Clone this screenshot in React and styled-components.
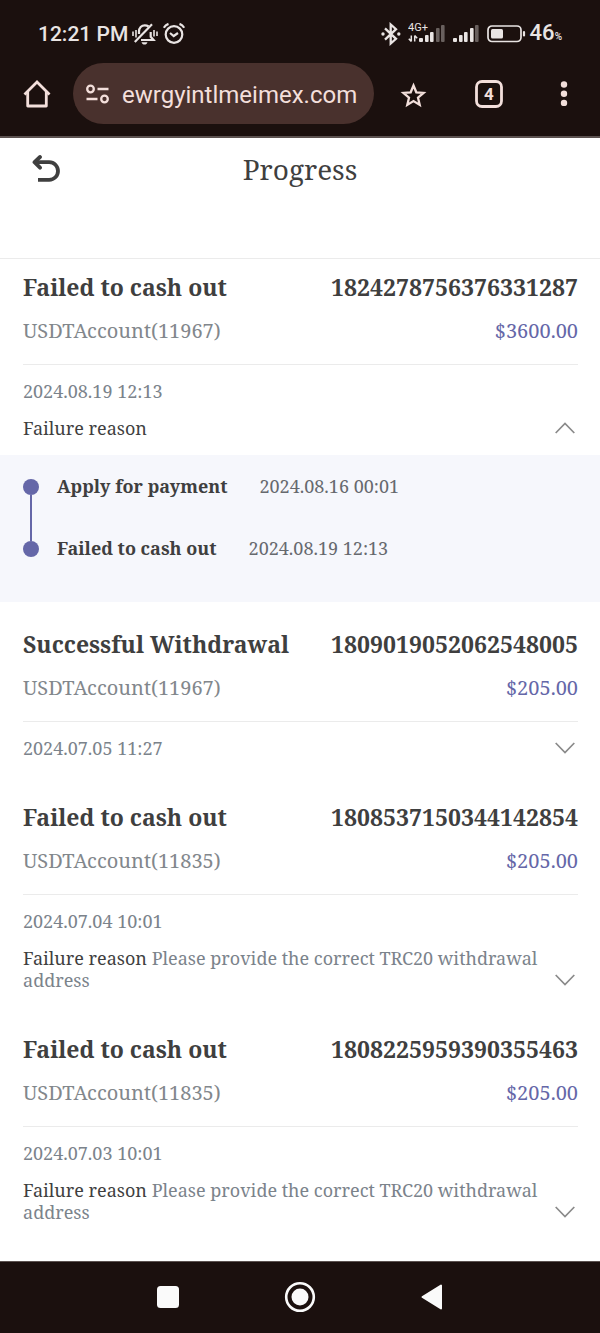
import React, { useState } from "react";
import styled, { createGlobalStyle } from "styled-components";

const colors = {
  chrome: "#1b100e",
  pill: "#49312d",
  chromeText: "#f3dfdb",
  status: "#e9e4e3",
  ink: "#3f3f3f",
  muted: "#82878c",
  date: "#7b838b",
  accent: "#6567a8",
  line: "#ebebeb",
  panel: "#f6f7fc",
};

const GlobalStyle = createGlobalStyle`
  * { box-sizing: border-box; }
  body {
    margin: 0;
    background: #fff;
    color: ${colors.ink};
    font-family: "Noto Serif", "DejaVu Serif Condensed", "DejaVu Serif", serif;
  }
  button, input { font: inherit; color: inherit; border: 0; background: none; padding: 0; margin: 0; }
  h1, h2, p, ol { margin: 0; padding: 0; }
`;

const Screen = styled.div`
  display: flex;
  flex-direction: column;
  min-height: 100vh;
`;

const BrowserChrome = styled.header`
  background: ${colors.chrome};
  color: ${colors.chromeText};
  border-bottom: 2px solid #5c5250;
  padding-bottom: 12px;
  font-family: Roboto, sans-serif;
`;

const StatusBar = styled.div`
  display: flex;
  align-items: center;
  justify-content: space-between;
  height: 63px;
  padding: 4px 38px 0;
  color: ${colors.status};
`;

const StatusGroup = styled.div`
  display: flex;
  align-items: center;
  gap: ${(p) => p.$gap}px;
`;

const Clock = styled.span`
  font-size: 21px;
  font-weight: 500;
  line-height: 28px;
`;

const Percent = styled.span`
  padding-top: 2px;
  font-size: 22px;
  font-weight: 500;
  line-height: 28px;
  small { font-size: 10px; }
`;

const Toolbar = styled.div`
  display: flex;
  align-items: center;
`;

const ToolButton = styled.button`
  flex: none;
  display: flex;
  align-items: center;
  justify-content: center;
  width: ${(p) => p.$width}px;
  height: 61px;
`;

const AddressPill = styled.label`
  flex: 1;
  min-width: 0;
  display: flex;
  align-items: center;
  gap: 12px;
  height: 61px;
  margin-right: 1px;
  padding: 0 8px 0 12px;
  border-radius: 31px;
  background: ${colors.pill};
`;

const AddressInput = styled.input`
  flex: 1;
  min-width: 0;
  height: 40px;
  padding-top: 2px;
  font-size: 24px;
  outline: none;
`;

const TitleBar = styled.div`
  display: grid;
  grid-template-columns: 92px 1fr 92px;
  align-items: center;
  height: 121px;
  padding-bottom: 58px;
  border-bottom: 1px solid ${colors.line};
`;

const BackButton = styled.button`
  display: flex;
  justify-content: center;
  align-items: center;
  height: 48px;
`;

const PageTitle = styled.h1`
  font-size: 28px;
  font-weight: 400;
  line-height: 40px;
  text-align: center;
`;

const RecordList = styled.main`
  flex: 1;
`;

const Record = styled.article`
  margin-bottom: 14px;
`;

const RecordBody = styled.div`
  padding: 12px 22px 16px 23px;
`;

const RecordRow = styled.div`
  display: flex;
  justify-content: space-between;
  align-items: center;
  gap: 16px;
`;

const RecordTitle = styled.h2`
  font-size: 23px;
  font-weight: 700;
  line-height: 32px;
`;

const RecordId = styled.span`
  font-size: 23px;
  font-weight: 700;
  line-height: 32px;
`;

const AccountRow = styled(RecordRow)`
  margin-top: 14px;
  padding-bottom: 19px;
  border-bottom: 1px solid ${colors.line};
  font-size: 20px;
  line-height: 28px;
  color: ${colors.muted};
`;

const Amount = styled.span`
  color: ${colors.accent};
`;

const RecordFooter = styled.div`
  display: flex;
  align-items: flex-end;
  gap: 4px;
  padding-top: 15px;
  font-size: 18px;
  line-height: 22px;
`;

const FooterText = styled.div`
  flex: 1;
  display: flex;
  flex-direction: column;
  gap: 15px;
  color: ${colors.date};
`;

const ReasonLabel = styled.span`
  color: ${colors.ink};
`;

const ToggleButton = styled.button`
  flex: none;
  display: flex;
  align-items: center;
  justify-content: center;
  width: 26px;
  height: 22px;
  svg { transform: ${(p) => (p.$open ? "rotate(180deg)" : "none")}; }
`;

const Timeline = styled.ol`
  list-style: none;
  height: 147px;
  padding: 20px 23px;
  background: ${colors.panel};
`;

const Step = styled.li`
  display: flex;
  gap: 18px;
  height: 62px;
  font-size: 18px;
  line-height: 22px;
`;

const StepMarker = styled.span`
  display: flex;
  flex-direction: column;
  align-items: center;
  width: 16px;
  padding-top: 4px;
  &::before {
    content: "";
    flex: none;
    width: 16px;
    height: 16px;
    border-radius: 50%;
    background: ${colors.accent};
  }
  &::after {
    content: "";
    width: 2px;
    height: ${(p) => (p.$last ? 0 : 46)}px;
    flex: none;
    background: ${colors.accent};
  }
`;

const StepText = styled.p`
  display: flex;
  gap: 32px;
  color: #66696e;
  strong { color: ${colors.ink}; }
`;

const NavBar = styled.nav`
  display: flex;
  justify-content: center;
  align-items: center;
  gap: 84px;
  height: 72px;
  padding-bottom: 2px;
  border-top: 1px solid #5c5250;
  background: ${colors.chrome};
`;

const NavButton = styled.button`
  display: flex;
  align-items: center;
  justify-content: center;
  width: 48px;
  height: 48px;
`;

const MutedBellIcon = () => (
  <svg width="26" height="24" viewBox="0 0 26 24" fill="none" stroke="currentColor" strokeWidth="2.2">
    <path d="M9 18h12.500l-2.800-3.200V10" />
    <path d="M7 12V9.500C7 5.800 9.500 3.300 12.800 3.300c1.500 0 2.700.4 3.800 1.200" />
    <path d="M2.800 20L20 2.300" />
    <path d="M9.500 20.300h6c-.5 1.700-1.500 2.300-3 2.300s-2.500-.6-3-2.300z" fill="currentColor" stroke="none" />
    <path d="M1 9.500v4.500M4 8v7.500M22 8v6.500M25 9.500v4.500" strokeWidth="1.600" />
  </svg>
);

const AlarmIcon = () => (
  <svg width="24" height="24" viewBox="0 0 24 24" fill="none" stroke="currentColor" strokeWidth="2.200">
    <circle cx="12" cy="12.500" r="8.300" />
    <path d="M8 11l3.700 3 4.300-3" />
    <path d="M1.800 5.800Q3.500 3 6.500 1.900M22.200 5.800Q20.500 3 17.500 1.900" />
  </svg>
);

const BluetoothIcon = () => (
  <svg width="20" height="24" viewBox="0 0 20 24" fill="none" stroke="currentColor" strokeWidth="2.300">
    <path d="M4 6.300l11 10.500-5.300 4.700V2.500l5.300 4.700-11 10.500" />
    <circle cx="2" cy="12" r="1.700" fill="currentColor" stroke="none" />
    <circle cx="17.800" cy="12" r="1.700" fill="currentColor" stroke="none" />
  </svg>
);

const bars = [
  [0, 4],
  [6, 7],
  [11, 10],
  [17, 14],
  [22, 17],
];

const SignalBars = ({ x, y, strong }) =>
  bars.map(([dx, h], i) => (
    <rect key={dx} x={x + dx} y={y - h} width={i ? 3.6 : 4} height={h} rx="1" fill="currentColor" opacity={i < strong ? 1 : 0.38} />
  ));

const MobileDataIcon = () => (
  <svg width="38" height="30" viewBox="0 0 38 30">
    <text x="0" y="12" fontFamily="Roboto, sans-serif" fontSize="11" fill="currentColor">4G+</text>
    <path d="M3.300 16.500v6M0.800 19.800l2.500 2.700M6.700 22.500v-6M9.200 19.200l-2.500-2.700" stroke="currentColor" strokeWidth="1.500" fill="none" />
    <SignalBars x={11} y={23} strong={3} />
  </svg>
);

const SignalIcon = () => (
  <svg width="27" height="22" viewBox="0 0 27 22">
    <SignalBars x={0} y={19} strong={4} />
  </svg>
);

const BatteryIcon = () => (
  <svg width="39" height="18" viewBox="0 0 39 18">
    <rect x="1" y="1" width="33" height="15.500" rx="4" fill="none" stroke="currentColor" strokeWidth="1.700" />
    <rect x="4" y="4" width="12" height="9.500" rx="1.500" fill="currentColor" />
    <path d="M37 7v3.500" stroke="currentColor" strokeWidth="2.200" strokeLinecap="round" />
  </svg>
);

const HomeIcon = () => (
  <svg width="28" height="28" viewBox="0 0 28 28" fill="none" stroke="currentColor" strokeWidth="2.800" strokeLinejoin="round">
    <path d="M1.500 14.500L14 2 26.500 14.500" strokeLinejoin="miter" />
    <path d="M4.700 12v14h18.600V12" />
  </svg>
);

const TuneIcon = () => (
  <svg width="25" height="22" viewBox="0 0 25 22" fill="none" stroke="currentColor" strokeWidth="2.300">
    <circle cx="5.500" cy="6" r="3.300" />
    <path d="M12.500 6h11M1.500 16h11" />
    <circle cx="19.500" cy="16" r="3.300" />
  </svg>
);

const StarIcon = () => (
  <svg width="28" height="28" viewBox="0 0 28 28" fill="none" stroke="currentColor" strokeWidth="2.300">
    <path d="M14.500 5.500l2.800 6.800 7.300.6-5.600 4.800 1.700 7.200-6.200-3.800-6.200 3.800 1.700-7.200-5.600-4.800 7.300-.6z" />
  </svg>
);

const TabsIcon = () => (
  <svg width="28" height="28" viewBox="0 0 28 28">
    <rect x="1.500" y="1.500" width="25" height="25" rx="5.500" fill="none" stroke="currentColor" strokeWidth="2.800" />
    <text x="14" y="20" textAnchor="middle" fontFamily="Roboto, sans-serif" fontSize="17" fontWeight="700" fill="currentColor">4</text>
  </svg>
);

const MenuIcon = () => (
  <svg width="8" height="28" viewBox="0 0 8 28" fill="currentColor">
    <circle cx="4" cy="4.500" r="3.200" />
    <circle cx="4" cy="13.700" r="3.200" />
    <circle cx="4" cy="22.900" r="3.200" />
  </svg>
);

const BackIcon = () => (
  <svg width="28" height="28" viewBox="0 0 28 28" fill="none" stroke="currentColor" strokeWidth="3.800" strokeLinejoin="round">
    <path d="M8 2L2.500 7.200 8 12.700" strokeLinecap="round" />
    <path d="M3 7.200h14.200a8.700 8.700 0 0 1 0 17.600H6" />
  </svg>
);

const ChevronIcon = () => (
  <svg width="20" height="12" viewBox="0 0 20 12" fill="none" stroke="#8a8a8a" strokeWidth="1.700">
    <path d="M.7 1L10 10.500 19.300 1" />
  </svg>
);

const records = [
  {
    title: "Failed to cash out",
    id: "1824278756376331287",
    account: "USDTAccount(11967)",
    amount: "$3600.00",
    date: "2024.08.19 12:13",
    reason: "",
    steps: [
      ["Apply for payment", "2024.08.16 00:01"],
      ["Failed to cash out", "2024.08.19 12:13"],
    ],
  },
  {
    title: "Successful Withdrawal",
    id: "1809019052062548005",
    account: "USDTAccount(11967)",
    amount: "$205.00",
    date: "2024.07.05 11:27",
  },
  {
    title: "Failed to cash out",
    id: "1808537150344142854",
    account: "USDTAccount(11835)",
    amount: "$205.00",
    date: "2024.07.04 10:01",
    reason: "Please provide the correct TRC20 withdrawal address",
  },
  {
    title: "Failed to cash out",
    id: "1808225959390355463",
    account: "USDTAccount(11835)",
    amount: "$205.00",
    date: "2024.07.03 10:01",
    reason: "Please provide the correct TRC20 withdrawal address",
  },
];

function WithdrawalRecord({ record }) {
  const { steps = [] } = record;
  const [open, setOpen] = useState(steps.length > 0);
  return (
    <Record>
      <RecordBody>
        <RecordRow>
          <RecordTitle>{record.title}</RecordTitle>
          <RecordId>{record.id}</RecordId>
        </RecordRow>
        <AccountRow>
          <span>{record.account}</span>
          <Amount>{record.amount}</Amount>
        </AccountRow>
        <RecordFooter>
          <FooterText>
            <time>{record.date}</time>
            {record.reason !== undefined && (
              <p>
                <ReasonLabel>Failure reason</ReasonLabel> {record.reason}
              </p>
            )}
          </FooterText>
          <ToggleButton type="button" $open={open} aria-expanded={open} aria-label="Toggle details" onClick={() => setOpen(!open)}>
            <ChevronIcon />
          </ToggleButton>
        </RecordFooter>
      </RecordBody>
      {open && steps.length > 0 && (
        <Timeline>
          {steps.map(([label, time], i) => (
            <Step key={label}>
              <StepMarker $last={i === steps.length - 1} />
              <StepText>
                <strong>{label}</strong>
                <time>{time}</time>
              </StepText>
            </Step>
          ))}
        </Timeline>
      )}
    </Record>
  );
}

export default function App() {
  return (
    <Screen>
      <GlobalStyle />
      <BrowserChrome>
        <StatusBar>
          <StatusGroup $gap={4}>
            <Clock>12:21 PM</Clock>
            <MutedBellIcon />
            <AlarmIcon />
          </StatusGroup>
          <StatusGroup $gap={7}>
            <BluetoothIcon />
            <MobileDataIcon />
            <SignalIcon />
            <StatusGroup $gap={4}>
              <BatteryIcon />
              <Percent>46<small>%</small></Percent>
            </StatusGroup>
          </StatusGroup>
        </StatusBar>
        <Toolbar>
          <ToolButton type="button" $width={73} aria-label="Home"><HomeIcon /></ToolButton>
          <AddressPill>
            <TuneIcon />
            <AddressInput type="text" aria-label="Address" defaultValue="ewrgyintlmeimex.com" />
          </AddressPill>
          <ToolButton type="button" $width={76} aria-label="Bookmark"><StarIcon /></ToolButton>
          <ToolButton type="button" $width={76} aria-label="Tabs"><TabsIcon /></ToolButton>
          <ToolButton type="button" $width={73} aria-label="Menu"><MenuIcon /></ToolButton>
        </Toolbar>
      </BrowserChrome>
      <TitleBar>
        <BackButton type="button" aria-label="Back"><BackIcon /></BackButton>
        <PageTitle>Progress</PageTitle>
      </TitleBar>
      <RecordList>
        {records.map((record) => (
          <WithdrawalRecord key={record.id} record={record} />
        ))}
      </RecordList>
      <NavBar>
        <NavButton type="button" aria-label="Recent apps">
          <svg width="24" height="24" viewBox="0 0 24 24"><rect x="1" y="1" width="22" height="22" rx="3.500" fill="#fafafa" /></svg>
        </NavButton>
        <NavButton type="button" aria-label="Home screen">
          <svg width="32" height="32" viewBox="0 0 32 32">
            <circle cx="16" cy="16" r="13.800" fill="none" stroke="#fafafa" strokeWidth="2.600" />
            <circle cx="16" cy="16" r="8.500" fill="#fafafa" />
          </svg>
        </NavButton>
        <NavButton type="button" aria-label="Go back">
          <svg width="24" height="28" viewBox="0 0 24 28"><path d="M2.500 14L21 2.500v23z" fill="#fafafa" stroke="#fafafa" strokeWidth="2" strokeLinejoin="round" /></svg>
        </NavButton>
      </NavBar>
    </Screen>
  );
}
